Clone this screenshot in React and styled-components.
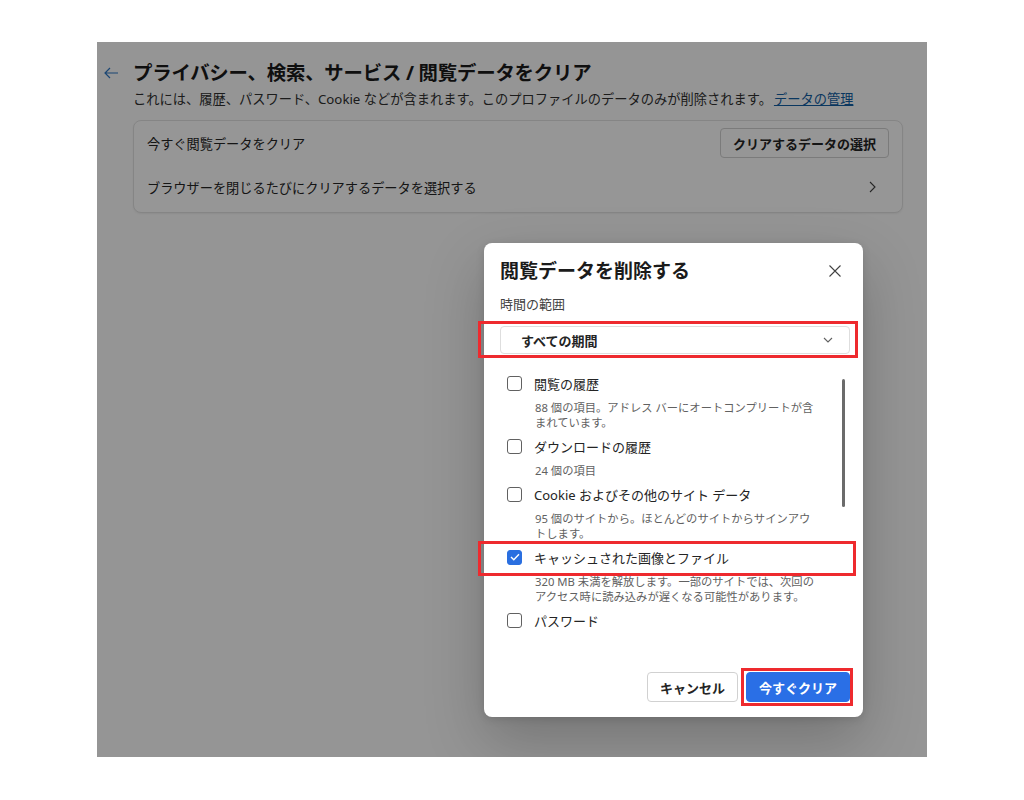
import styled, { createGlobalStyle } from "styled-components";

const GlobalStyle = createGlobalStyle`
  html, body {
    margin: 0;
    padding: 0;
    background: #ffffff;
  }
  body {
    font-family: "Noto Sans", "Noto Sans CJK JP", sans-serif;
    color: #1b1b1b;
  }
`;

const items = [
  {
    label: "閲覧の履歴",
    lines: ["88 個の項目。アドレス バーにオートコンプリートが含", "まれています。"],
  },
  { label: "ダウンロードの履歴", lines: ["24 個の項目"] },
  {
    label: "Cookie およびその他のサイト データ",
    lines: ["95 個のサイトから。ほとんどのサイトからサインアウ", "トします。"],
  },
  {
    label: "キャッシュされた画像とファイル",
    checked: true,
    marked: true,
    lines: ["320 MB 未満を解放します。一部のサイトでは、次回の", "アクセス時に読み込みが遅くなる可能性があります。"],
  },
  { label: "パスワード", lines: [] },
];

function App() {
  return (
    <>
      <GlobalStyle />
      <Frame>
        <Page>
          <BackArrow viewBox="0 0 16 16">
            <path d="M15 8H2M7 3L2 8l5 5" fill="none" stroke="#2f78c4" strokeWidth="1.2" />
          </BackArrow>
          <Title>プライバシー、検索、サービス / 閲覧データをクリア</Title>
          <span />
          <Subtitle>
            これには、履歴、パスワード、Cookie などが含まれます。このプロファイルのデータのみが削除されます。
            <Link>データの管理</Link>
          </Subtitle>
          <span />
          <Card>
            <CardRow>
              <span>今すぐ閲覧データをクリア</span>
              <OutlineButton>クリアするデータの選択</OutlineButton>
            </CardRow>
            <CardRow>
              <span>ブラウザーを閉じるたびにクリアするデータを選択する</span>
              <svg width="10" height="14" viewBox="0 0 10 14">
                <path d="M3 2l5 5-5 5" fill="none" stroke="#424242" strokeWidth="1.1" />
              </svg>
            </CardRow>
          </Card>
        </Page>

        <Overlay>
          <Dialog>
            <DialogHead>
              <DialogTitle>閲覧データを削除する</DialogTitle>
              <svg width="14" height="14" viewBox="0 0 14 14">
                <path d="M1.5 1.5l11 11M12.5 1.5l-11 11" stroke="#424242" strokeWidth="1.1" />
              </svg>
            </DialogHead>
            <FieldLabel>時間の範囲</FieldLabel>
            <Marked $inset="-5px -8px -4px -22px" $gap="12px">
              <Select>
                <span>すべての期間</span>
                <svg width="10" height="6" viewBox="0 0 10 6">
                  <path d="M1 1l4 4 4-4" fill="none" stroke="#616161" strokeWidth="1.1" />
                </svg>
              </Select>
            </Marked>

            <List>
              <Scrollbar />
              {items.map((it) => (
                <Item key={it.label}>
                  <Row $marked={it.marked}>
                    <Checkbox $checked={it.checked}>
                      {it.checked && (
                        <svg width="10" height="8" viewBox="0 0 10 8">
                          <path d="M1 4l2.8 2.8L9 1.2" fill="none" stroke="#fff" strokeWidth="1.4" />
                        </svg>
                      )}
                    </Checkbox>
                    <span>{it.label}</span>
                  </Row>
                  {it.lines.length > 0 && (
                    <Desc>
                      {it.lines.map((l, i) => (
                        <span key={i}>
                          {l}
                          {i < it.lines.length - 1 && <br />}
                        </span>
                      ))}
                    </Desc>
                  )}
                </Item>
              ))}
            </List>

            <Footer>
              <Button>キャンセル</Button>
              <Marked $inset="-4px -3px -4px -5px">
                <Button $primary>今すぐクリア</Button>
              </Marked>
            </Footer>
          </Dialog>
        </Overlay>
      </Frame>
    </>
  );
}

const Frame = styled.div`
  position: relative;
  width: 830px;
  height: 715px;
  margin: 42px 0 0 97px;
  overflow: hidden;
  background: #fdfdfd;
`;

const Page = styled.div`
  display: grid;
  grid-template-columns: 30px 1fr;
  align-items: center;
  padding: 18px 24px 0 6px;
`;

const BackArrow = styled.svg`
  width: 16px;
  height: 16px;
`;

const Title = styled.h1`
  margin: 0;
  font-size: 19.4px;
  line-height: 26px;
  font-weight: 700;
  color: #1b1b1b;
  letter-spacing: -0.2px;
`;

const Subtitle = styled.p`
  margin: 4px 0 0;
  font-size: 13.25px;
  line-height: 18px;
  color: #303030;
  white-space: nowrap;
`;

const Link = styled.a`
  color: #115ea3;
  text-decoration: underline;
  margin-left: 2px;
`;

const Card = styled.div`
  margin-top: 12px;
  padding-bottom: 3px;
  background: #ffffff;
  border: 1px solid #e3e3e3;
  border-radius: 8px;
  box-shadow: 0 1px 2px rgba(0, 0, 0, 0.06);
`;

const CardRow = styled.div`
  display: flex;
  align-items: center;
  justify-content: space-between;
  height: 44px;
  padding: 0 13px 0 13px;
  font-size: 13.2px;
  color: #242424;

  svg {
    margin-right: 12px;
  }
`;

const OutlineButton = styled.button`
  height: 30px;
  padding: 0 12px;
  font-family: inherit;
  font-size: 13px;
  font-weight: 600;
  color: #242424;
  background: #ffffff;
  border: 1px solid #d1d1d1;
  border-radius: 4px;
`;

const Overlay = styled.div`
  position: absolute;
  inset: 0;
  display: flex;
  align-items: flex-start;
  padding: 201px 0 0 387px;
  background: rgba(0, 0, 0, 0.41);
`;

const Dialog = styled.div`
  width: 379px;
  box-sizing: border-box;
  padding: 14px 13px 15px 16px;
  background: #ffffff;
  border-radius: 8px;
  box-shadow: 0 24px 60px rgba(0, 0, 0, 0.22), 0 2px 8px rgba(0, 0, 0, 0.12);
  display: flex;
  flex-direction: column;
`;

const DialogHead = styled.div`
  display: flex;
  align-items: center;
  justify-content: space-between;

  svg {
    margin-right: 8px;
  }
`;

const DialogTitle = styled.h2`
  margin: 0;
  font-size: 19px;
  line-height: 28px;
  font-weight: 600;
  color: #1b1b1b;
`;

const FieldLabel = styled.div`
  margin-top: 9px;
  font-size: 13px;
  line-height: 20px;
  color: #424242;
`;

const Marked = styled.div`
  position: relative;
  margin-top: ${(p) => p.$gap || "0"};

  &::after {
    content: "";
    position: absolute;
    inset: ${(p) => p.$inset};
    border: 3px solid #ee2a2e;
    pointer-events: none;
  }
`;

const Select = styled.div`
  height: 28px;
  box-sizing: border-box;
  display: flex;
  align-items: center;
  justify-content: space-between;
  padding: 0 16px 0 20px;
  border: 1px solid #dedede;
  border-radius: 4px;
  font-size: 13px;
  font-weight: 700;
  color: #242424;
`;

const List = styled.div`
  position: relative;
  height: 285px;
  margin-top: 17px;
  padding-left: 7px;
  display: flex;
  flex-direction: column;
  gap: 4px;
`;

const Scrollbar = styled.div`
  position: absolute;
  right: 5px;
  top: 8px;
  width: 3px;
  height: 128px;
  border-radius: 2px;
  background: #6b6b6b;
`;

const Item = styled.div`
  display: flex;
  flex-direction: column;
`;

const Row = styled.div`
  position: relative;
  display: flex;
  align-items: center;
  gap: 12px;
  height: 24px;
  font-size: 13px;
  color: #242424;

  ${(p) =>
    p.$marked &&
    `
    &::after {
      content: "";
      position: absolute;
      top: -4px;
      bottom: -7px;
      left: -29px;
      right: -6px;
      border: 3px solid #ee2a2e;
    }
  `}
`;

const Checkbox = styled.span`
  width: 15px;
  height: 15px;
  box-sizing: border-box;
  flex: none;
  display: flex;
  align-items: center;
  justify-content: center;
  border-radius: 3px;
  border: 1px solid ${(p) => (p.$checked ? "#2a6fe0" : "#616161")};
  background: ${(p) => (p.$checked ? "#2a6fe0" : "#ffffff")};
`;

const Desc = styled.div`
  margin-top: 5px;
  padding-left: 28px;
  font-size: 11.3px;
  line-height: 15px;
  color: #616161;
  white-space: nowrap;
`;

const Footer = styled.div`
  margin-top: 16px;
  display: flex;
  justify-content: flex-end;
  gap: 8px;
`;

const Button = styled.button`
  height: 30px;
  padding: 0 12px;
  font-family: inherit;
  font-size: 13px;
  font-weight: 700;
  border-radius: 4px;
  color: ${(p) => (p.$primary ? "#ffffff" : "#242424")};
  background: ${(p) => (p.$primary ? "#2a6fe6" : "#ffffff")};
  border: 1px solid ${(p) => (p.$primary ? "#2a6fe6" : "#d1d1d1")};
`;

export default App;
